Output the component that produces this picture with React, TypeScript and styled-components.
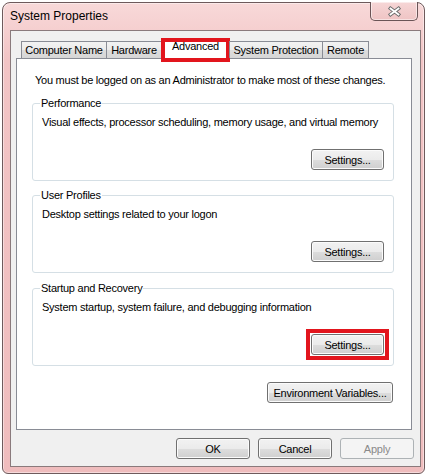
import React from "react";
import styled, { createGlobalStyle, css } from "styled-components";

const Global = createGlobalStyle`
  html, body { margin: 0; padding: 0; background: #ffffff; }
  body { font-family: "Liberation Sans", Arial, sans-serif; font-size: 11px; letter-spacing: -0.25px; color: #000; }
  * { box-sizing: border-box; }
`;

const Window = styled.div`
  margin: 2px 0 0 2px;
  width: 423px;
  height: 472px;
  border: 1px solid #6e5a5c;
  border-radius: 8px 8px 6px 6px;
  background: linear-gradient(180deg, #f8d9d9 0%, #f2c4c5 12%, #efbcbd 100%);
  box-shadow: inset 0 0 0 1px rgba(255, 255, 255, 0.45);
  padding: 0 3px 6px 7px;
  display: flex;
  flex-direction: column;
`;

const TitleBar = styled.div`
  height: 27px;
  display: flex;
  justify-content: space-between;
  align-items: flex-start;
`;

const Title = styled.div`
  padding: 6px 0 0 0;
  font-size: 12px;
  letter-spacing: 0;
  line-height: 14px;
  color: #000;
`;

const CloseButton = styled.div`
  width: 48px;
  height: 19px;
  margin: -1px 3px 0 0;
  border: 1px solid #6a5456;
  border-top: none;
  border-radius: 0 0 5px 5px;
  background: linear-gradient(180deg, #f6d6d6 0%, #efc4c4 100%);
  box-shadow: inset 0 0 0 1px rgba(255, 255, 255, 0.5);
  display: flex;
  align-items: center;
  justify-content: center;
`;

const Body = styled.div`
  width: 411px;
  height: 437px;
  border: 1px solid #8a7a7c;
  background: #f0f0f0;
  padding: 7px 8px 7px 5px;
  display: flex;
  flex-direction: column;
`;

const TabStrip = styled.div`
  height: 20px;
  display: flex;
  align-items: flex-end;
  padding-left: 5px;
  position: relative;
  z-index: 1;
`;

const Tab = styled.div<{ $w: number; $selected?: boolean; $highlight?: boolean }>`
  position: relative;
  width: ${(p) => p.$w}px;
  height: 17px;
  margin-left: -1px;
  border: 1px solid #898c95;
  border-bottom: none;
  background: linear-gradient(180deg, #f2f2f2 0%, #ebebeb 50%, #dddddd 51%, #d6d6d6 100%);
  line-height: 16px;
  text-align: center;
  white-space: nowrap;
  &:first-child { margin-left: 0; }
  ${(p) =>
    p.$selected &&
    css`
      height: 21px;
      margin-bottom: -1px;
      background: #ffffff;
      line-height: 15px;
    `}
  ${(p) =>
    p.$highlight &&
    css`
      &::after {
        content: "";
        position: absolute;
        left: -1px;
        right: -1px;
        top: -1px;
        bottom: -3px;
        border: 4px solid #e2151d;
      }
    `}
`;

const Panel = styled.div`
  width: 396px;
  height: 372px;
  border: 1px solid #898c95;
  background: #ffffff;
  padding: 0 17px 0 15px;
  display: flex;
  flex-direction: column;
`;

const Notice = styled.div`
  margin-top: 14px;
  padding-left: 3px;
  line-height: 14px;
  white-space: nowrap;
`;

const Group = styled.fieldset<{ $top: number }>`
  margin: ${(p) => p.$top}px 0 0 0;
  padding: 0 9px 10px 8px;
  border: 1px solid #d5dfe5;
  border-radius: 3px;
  min-width: 0;
  display: flex;
  flex-direction: column;
`;

const Legend = styled.legend`
  padding: 0 1px;
  margin-left: -1px;
  line-height: 14px;
`;

const Description = styled.div`
  margin-top: 5px;
  padding-left: 1px;
  line-height: 14px;
  white-space: nowrap;
`;

const ButtonRow = styled.div<{ $top: number; $right?: number }>`
  display: flex;
  justify-content: flex-end;
  gap: 8px;
  margin-top: ${(p) => p.$top}px;
  margin-right: ${(p) => p.$right ?? 0}px;
`;

const Button = styled.button<{ $w: number; $highlight?: boolean }>`
  position: relative;
  width: ${(p) => p.$w}px;
  height: 21px;
  padding: 0;
  border: 1px solid #707070;
  border-radius: 3px;
  background: linear-gradient(180deg, #f2f2f2 0%, #ebebeb 50%, #dddddd 51%, #cfcfcf 100%);
  box-shadow: inset 0 0 0 1px #fbfbfb;
  font-family: "Liberation Sans", Arial, sans-serif;
  font-size: 11px;
  letter-spacing: -0.25px;
  color: #000;
  ${(p) =>
    p.$highlight &&
    css`
      &::after {
        content: "";
        position: absolute;
        left: -6px;
        right: -6px;
        top: -6px;
        bottom: -6px;
        border: 4px solid #e2151d;
      }
    `}
  &:disabled {
    border-color: #adb2b5;
    background: #f4f4f4;
    box-shadow: none;
    color: #8a8a8a;
  }
`;

const Footer = styled.div`
  display: flex;
  justify-content: flex-end;
  gap: 8px;
  margin-top: 8px;
  margin-right: -2px;
`;

function CloseGlyph() {
  return (
    <svg width="15" height="11" viewBox="0 0 15 11">
      <path d="M3.5 2.5 L11.5 8.5 M11.5 2.5 L3.5 8.5" stroke="#6a6a6a" strokeWidth="3.6" strokeLinecap="square" />
      <path d="M3.5 2.5 L11.5 8.5 M11.5 2.5 L3.5 8.5" stroke="#ffffff" strokeWidth="1.8" strokeLinecap="square" />
    </svg>
  );
}

export default function App() {
  return (
    <>
      <Global />
      <Window>
        <TitleBar>
          <Title>System Properties</Title>
          <CloseButton>
            <CloseGlyph />
          </CloseButton>
        </TitleBar>
        <Body>
          <TabStrip>
            <Tab $w={86}>Computer Name</Tab>
            <Tab $w={56}>Hardware</Tab>
            <Tab $w={69} $selected $highlight>
              Advanced
            </Tab>
            <Tab $w={94}>System Protection</Tab>
            <Tab $w={47}>Remote</Tab>
          </TabStrip>
          <Panel>
            <Notice>You must be logged on as an Administrator to make most of these changes.</Notice>
            <Group $top={9}>
              <Legend>Performance</Legend>
              <Description>Visual effects, processor scheduling, memory usage, and virtual memory</Description>
              <ButtonRow $top={20}>
                <Button $w={73}>Settings...</Button>
              </ButtonRow>
            </Group>
            <Group $top={7}>
              <Legend>User Profiles</Legend>
              <Description>Desktop settings related to your logon</Description>
              <ButtonRow $top={20}>
                <Button $w={73}>Settings...</Button>
              </ButtonRow>
            </Group>
            <Group $top={8}>
              <Legend>Startup and Recovery</Legend>
              <Description>System startup, system failure, and debugging information</Description>
              <ButtonRow $top={20}>
                <Button $w={73} $highlight>
                  Settings...
                </Button>
              </ButtonRow>
            </Group>
            <ButtonRow $top={16} $right={1}>
              <Button $w={126}>Environment Variables...</Button>
            </ButtonRow>
          </Panel>
          <Footer>
            <Button $w={74}>OK</Button>
            <Button $w={74}>Cancel</Button>
            <Button $w={74} disabled>
              Apply
            </Button>
          </Footer>
        </Body>
      </Window>
    </>
  );
}
